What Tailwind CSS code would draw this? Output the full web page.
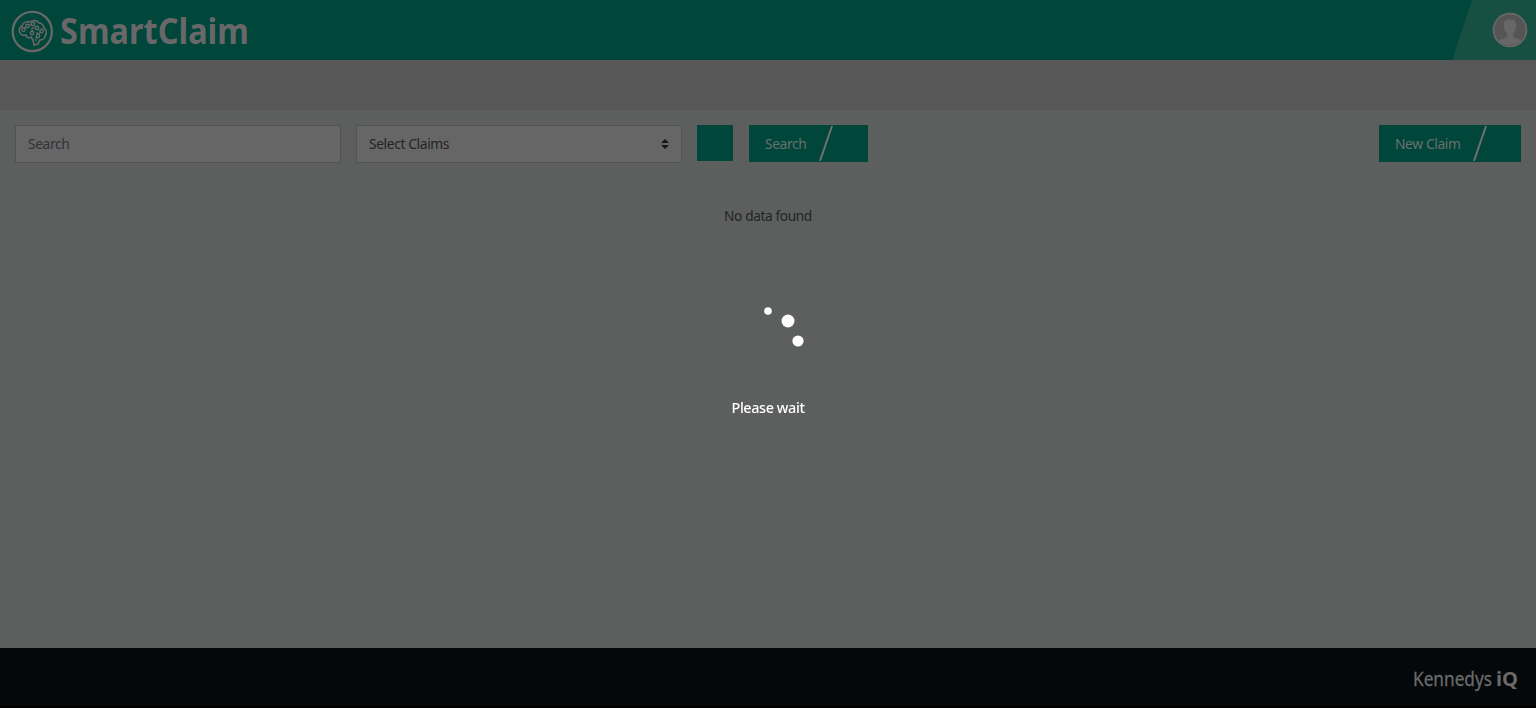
<!DOCTYPE html>
<html lang="en">
<head>
<meta charset="utf-8">
<title>SmartClaim</title>
<script src="https://cdn.jsdelivr.net/npm/@tailwindcss/browser@4"></script>
</head>
<body class="h-screen overflow-hidden flex flex-col bg-[#5c5f5d] font-['Noto_Sans','Open_Sans',sans-serif] text-[14.4px] tracking-[-0.4px] leading-[22px] text-[#222426]">
<header class="h-[60px] shrink-0 flex justify-between bg-[#00463a]">
  <svg class="w-[260px] h-[60px] tracking-normal" viewBox="0 0 260 60" fill="none" stroke="#686868">
    <circle cx="32.3" cy="31.500" r="19.600" stroke-width="2.300"/>
    <path d="M20 33c-2-3 0-6 2-7 1-4 5-5 8-4 3-3 8-1 9 1 3 0 5 3 5 5 3 2 3 6 1 8 0 3-3 4-5 4l-2 4-4 1-1-5-2-3c-2 2-5 0-5-2-3 1-5 0-6-2z" stroke-width="1.600"/>
    <path d="M23.500 29.500L27.500 26l5.500-2m4 3.500l-5 0.500 0 5m5-1l1 4m3-5l-3 5m-2 1v4" stroke-width="1.200"/>
    <g fill="#00463a" stroke-width="1.400"><circle cx="23.500" cy="29.500" r="1.700"/><circle cx="27.500" cy="26" r="1.700"/><circle cx="33" cy="24" r="1.700"/><circle cx="37" cy="28" r="1.700"/><circle cx="32" cy="33" r="1.700"/><circle cx="41.500" cy="31" r="1.700"/><circle cx="38" cy="36" r="1.700"/></g>
    <text x="60" y="44" textLength="189" lengthAdjust="spacingAndGlyphs" font-family="Noto Sans" font-size="36.500" font-weight="700" fill="#686868" stroke="none">SmartClaim</text>
  </svg>
  <svg class="w-[84px] h-[60px]" viewBox="0 0 84 60">
    <path d="M20 0H84V60H0Z" fill="#174f43"/>
    <circle cx="58" cy="30" r="16.500" fill="#555" stroke="#6a6a6a" stroke-width="1.500"/>
    <path d="M47 41c2-3 7-2.500 8-4.500v-3c-3-3-4-8-2.500-12 1.500-3 9.500-3 11 0 1.500 4 .5 9-2.500 12v3c1 2 6 1.500 8 4.500a16 16 0 0 1-22 0z" fill="#676767"/>
  </svg>
</header>
<div class="h-[50px] shrink-0 bg-[#575757]"></div>
<main class="flex-1 px-[15px] pt-[15px]">
  <div class="flex items-start h-[38px]">
    <div class="w-[326px] h-[38px] border border-[#525453] bg-[#666] px-3 flex items-center text-[#2f3336]"><span class="origin-left scale-x-[.96]">Search</span></div>
    <div class="ml-[15px] w-[326px] h-[38px] border border-[#525453] bg-[#666] px-3 flex items-center justify-between">
      <span class="origin-left scale-x-[.96]">Select Claims</span>
      <svg class="w-2 h-[10px]" viewBox="0 0 8 10" fill="#151719"><path d="M0 4L4 0l4 4zM0 6h8l-4 4z"/></svg>
    </div>
    <div class="ml-[15px] size-9 bg-[#00463a]"></div>
    <div class="ml-4 w-[119px] h-[37px] bg-[#00463a] pl-4 flex items-center text-[#6a706e]">
      <span class="w-[54px]"><span class="inline-block origin-left scale-x-[.96]">Search</span></span>
      <svg class="w-[14px] h-[37px]" viewBox="0 0 14 37"><path d="M1 36L13 1" stroke="#707070" stroke-width="2"/></svg>
    </div>
    <div class="ml-auto w-[142px] h-[37px] bg-[#00463a] pl-4 flex items-center text-[#6a706e]">
      <span class="w-[78px] whitespace-nowrap"><span class="inline-block origin-left scale-x-[.96]">New Claim</span></span>
      <svg class="w-[14px] h-[37px]" viewBox="0 0 14 37"><path d="M1 36L13 1" stroke="#707070" stroke-width="2"/></svg>
    </div>
  </div>
  <p class="mt-[42px] text-center scale-x-[.95]">No data found</p>
</main>
<footer class="h-[60px] shrink-0 flex justify-end bg-[#04080b] border-b-2 border-black">
  <svg class="w-[130px] h-[58px] tracking-normal" viewBox="0 0 130 58" fill="#6a6a6a">
    <text x="7" y="38" textLength="79" lengthAdjust="spacingAndGlyphs" font-family="Noto Sans" font-size="20" stroke="#6a6a6a" stroke-width=".3">Kennedys</text>
    <text x="90" y="38" textLength="22" lengthAdjust="spacingAndGlyphs" font-family="Noto Sans" font-size="20" font-weight="700">iQ</text>
  </svg>
</footer>
<div class="fixed inset-0 text-white">
  <svg class="absolute left-[748px] top-[300px] size-[60px]" viewBox="0 0 60 60" fill="white"><circle cx="20" cy="11" r="3.800"/><circle cx="40" cy="21" r="6.500"/><circle cx="50" cy="41" r="5.600"/></svg>
  <p class="absolute inset-x-0 top-[397px] text-center font-medium">Please wait</p>
</div>
</body>
</html>
